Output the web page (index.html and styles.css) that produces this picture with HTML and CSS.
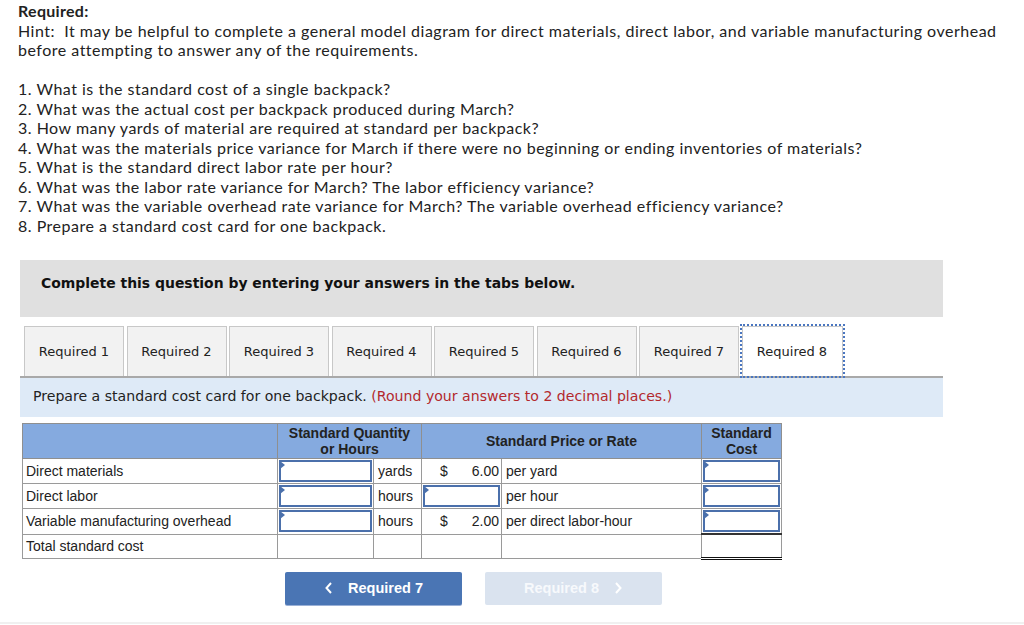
FILE: index.html
```html
<!DOCTYPE html>
<html>
<head>
<meta charset="utf-8">
<link rel="stylesheet" href="styles.css">
</head>
<body>
<div class="page">
  <div class="intro">
    <div class="req-title">Required:</div>
    <div>Hint:&nbsp; It may be helpful to complete a general model diagram for direct materials, direct labor, and variable manufacturing overhead before attempting to answer any of the requirements.</div>
    <ol class="questions">
      <li>1. What is the standard cost of a single backpack?</li>
      <li>2. What was the actual cost per backpack produced during March?</li>
      <li>3. How many yards of material are required at standard per backpack?</li>
      <li>4. What was the materials price variance for March if there were no beginning or ending inventories of materials?</li>
      <li>5. What is the standard direct labor rate per hour?</li>
      <li>6. What was the labor rate variance for March? The labor efficiency variance?</li>
      <li>7. What was the variable overhead rate variance for March? The variable overhead efficiency variance?</li>
      <li>8. Prepare a standard cost card for one backpack.</li>
    </ol>
  </div>

  <div class="panel">
    <div class="complete-box">Complete this question by entering your answers in the tabs below.</div>
    <div class="tabs">
      <div class="tab">Required 1</div>
      <div class="tab">Required 2</div>
      <div class="tab">Required 3</div>
      <div class="tab">Required 4</div>
      <div class="tab">Required 5</div>
      <div class="tab">Required 6</div>
      <div class="tab">Required 7</div>
      <div class="tab active">Required 8</div>
    </div>
    <div class="instruction">Prepare a standard cost card for one backpack. <span class="note">(Round your answers to 2 decimal places.)</span></div>

    <table class="card">
      <colgroup>
        <col class="c-label"><col class="c-qty"><col class="c-unit"><col class="c-price"><col class="c-per"><col class="c-cost">
      </colgroup>
      <thead>
        <tr>
          <th></th>
          <th colspan="2">Standard Quantity<br>or Hours</th>
          <th colspan="2">Standard Price or Rate</th>
          <th>Standard<br>Cost</th>
        </tr>
      </thead>
      <tbody>
        <tr>
          <td class="label">Direct materials</td>
          <td class="inp"><div class="box"></div></td>
          <td class="unit">yards</td>
          <td class="price"><span>$</span><span>6.00</span></td>
          <td class="per">per yard</td>
          <td class="inp"><div class="box"></div></td>
        </tr>
        <tr>
          <td class="label">Direct labor</td>
          <td class="inp"><div class="box"></div></td>
          <td class="unit">hours</td>
          <td class="inp"><div class="box"></div></td>
          <td class="per">per hour</td>
          <td class="inp"><div class="box"></div></td>
        </tr>
        <tr>
          <td class="label">Variable manufacturing overhead</td>
          <td class="inp"><div class="box"></div></td>
          <td class="unit">hours</td>
          <td class="price"><span>$</span><span>2.00</span></td>
          <td class="per">per direct labor-hour</td>
          <td class="inp"><div class="box"></div></td>
        </tr>
        <tr>
          <td class="label">Total standard cost</td>
          <td></td>
          <td></td>
          <td></td>
          <td></td>
          <td class="total"></td>
        </tr>
      </tbody>
    </table>

    <div class="nav">
      <div class="btn prev">
        <svg width="10" height="14" viewBox="0 0 10 14"><path d="M7 2 L2.5 7 L7 12" fill="none" stroke="#fff" stroke-width="2"/></svg>
        <span>Required 7</span>
      </div>
      <div class="btn next">
        <span>Required 8</span>
        <svg width="10" height="14" viewBox="0 0 10 14"><path d="M3 2 L7.5 7 L3 12" fill="none" stroke="#fff" stroke-width="2"/></svg>
      </div>
    </div>
  </div>
  <div class="bottom-line"></div>
</div>
</body>
</html>
```

FILE: styles.css
```css
html, body {
  margin: 0;
  padding: 0;
  background: #fff;
}

.page {
  width: 1024px;
  height: 625px;
  position: relative;
  overflow: hidden;
}

.intro {
  padding: 1px 0 0 18px;
  font-family: Lato, "Open Sans", sans-serif;
  font-size: 16px;
  letter-spacing: 0.5px;
  line-height: 19.5px;
  color: #222;
  width: 1000px;
}

.req-title {
  font-weight: bold;
  letter-spacing: 0.3px;
}

.questions {
  list-style: none;
  margin: 19.5px 0 0 0;
  padding: 0;
}

.panel {
  margin: 25px 0 0 20px;
  width: 923px;
}

.complete-box {
  background: #e0e0e0;
  height: 57px;
  box-sizing: border-box;
  padding: 15px 0 0 21px;
  font-family: "DejaVu Sans", Verdana, sans-serif;
  font-weight: bold;
  font-size: 13.95px;
  color: #111;
}

.tabs {
  display: flex;
  gap: 2.5px;
  padding: 9px 0 0 4px;
  border-bottom: 2px solid #a9a9a9;
}

.tab {
  width: 100px;
  height: 50px;
  box-sizing: border-box;
  background: #f2f2f2;
  border: 1px solid #c8c8c8;
  border-bottom: none;
  display: flex;
  align-items: center;
  justify-content: center;
  font-family: "DejaVu Sans", Verdana, sans-serif;
  font-size: 13px;
  color: #222;
}

.tab.active {
  background: #fff;
  outline: 2px dotted #4a76c0;
  outline-offset: 0px;
  width: 101px;
}

.instruction {
  background: #deeaf7;
  height: 39px;
  box-sizing: border-box;
  padding: 10px 0 0 13px;
  font-family: "DejaVu Sans", Verdana, sans-serif;
  font-size: 14.1px;
  color: #222;
}

.note {
  color: #b3282d;
}

.card {
  border-collapse: collapse;
  margin: 6px 0 0 2px;
  font-family: "Liberation Sans", Arial, sans-serif;
  font-size: 14px;
  color: #222;
  table-layout: fixed;
}

.c-label { width: 255px; }
.c-qty { width: 96px; }
.c-unit { width: 48px; }
.c-price { width: 80px; }
.c-per { width: 200px; }
.c-cost { width: 80px; }

.card th {
  background: #85aadf;
  border: 1px solid #8f8f8f;
  height: 34px;
  padding: 0;
  font-weight: bold;
  font-size: 14px;
  line-height: 16px;
  color: #222;
  text-align: center;
}

.card td {
  border: 1px solid #9a9a9a;
  height: 24px;
  padding: 0;
  box-sizing: border-box;
  vertical-align: middle;
}

.card td.label {
  padding-left: 3px;
}

.card td.unit {
  padding-left: 4px;
}

.card td.per {
  padding-left: 4px;
}

.card td.price {
  padding: 0 2px 0 18px;
}

.price {
  white-space: nowrap;
}

.card td.price span:first-child {
  float: left;
}

.card td.price span:last-child {
  float: right;
}

.card td.inp {
  padding: 1px;
}

.box {
  height: 22px;
  box-sizing: border-box;
  border: 2px solid #4b70ab;
  position: relative;
  background: #fff;
}

.box::before {
  content: "";
  position: absolute;
  left: -1px;
  top: -1px;
  border-left: 5px solid #4b70ab;
  border-top: 4px solid transparent;
  border-bottom: 4px solid transparent;
}

.card td.total {
  border-top: 2px solid #333;
  border-bottom: 3px double #111;
}

.nav {
  display: flex;
  gap: 23px;
  padding: 12px 0 0 265px;
}

.btn {
  width: 177px;
  height: 33px;
  border-radius: 2px;
  display: flex;
  align-items: center;
  justify-content: center;
  gap: 14px;
  font-family: "Liberation Sans", Arial, sans-serif;
  font-weight: bold;
  font-size: 14.5px;
  color: #fff;
}

.btn.prev {
  background: #4a75b4;
  box-shadow: 0 1px 0 #9ab0d6;
}

.btn.next {
  background: #dae3ef;
  color: #f7f9fc;
}

.bottom-line {
  position: absolute;
  left: 0;
  right: 0;
  top: 622px;
  height: 2px;
  background: #f0f0f0;
}
```
